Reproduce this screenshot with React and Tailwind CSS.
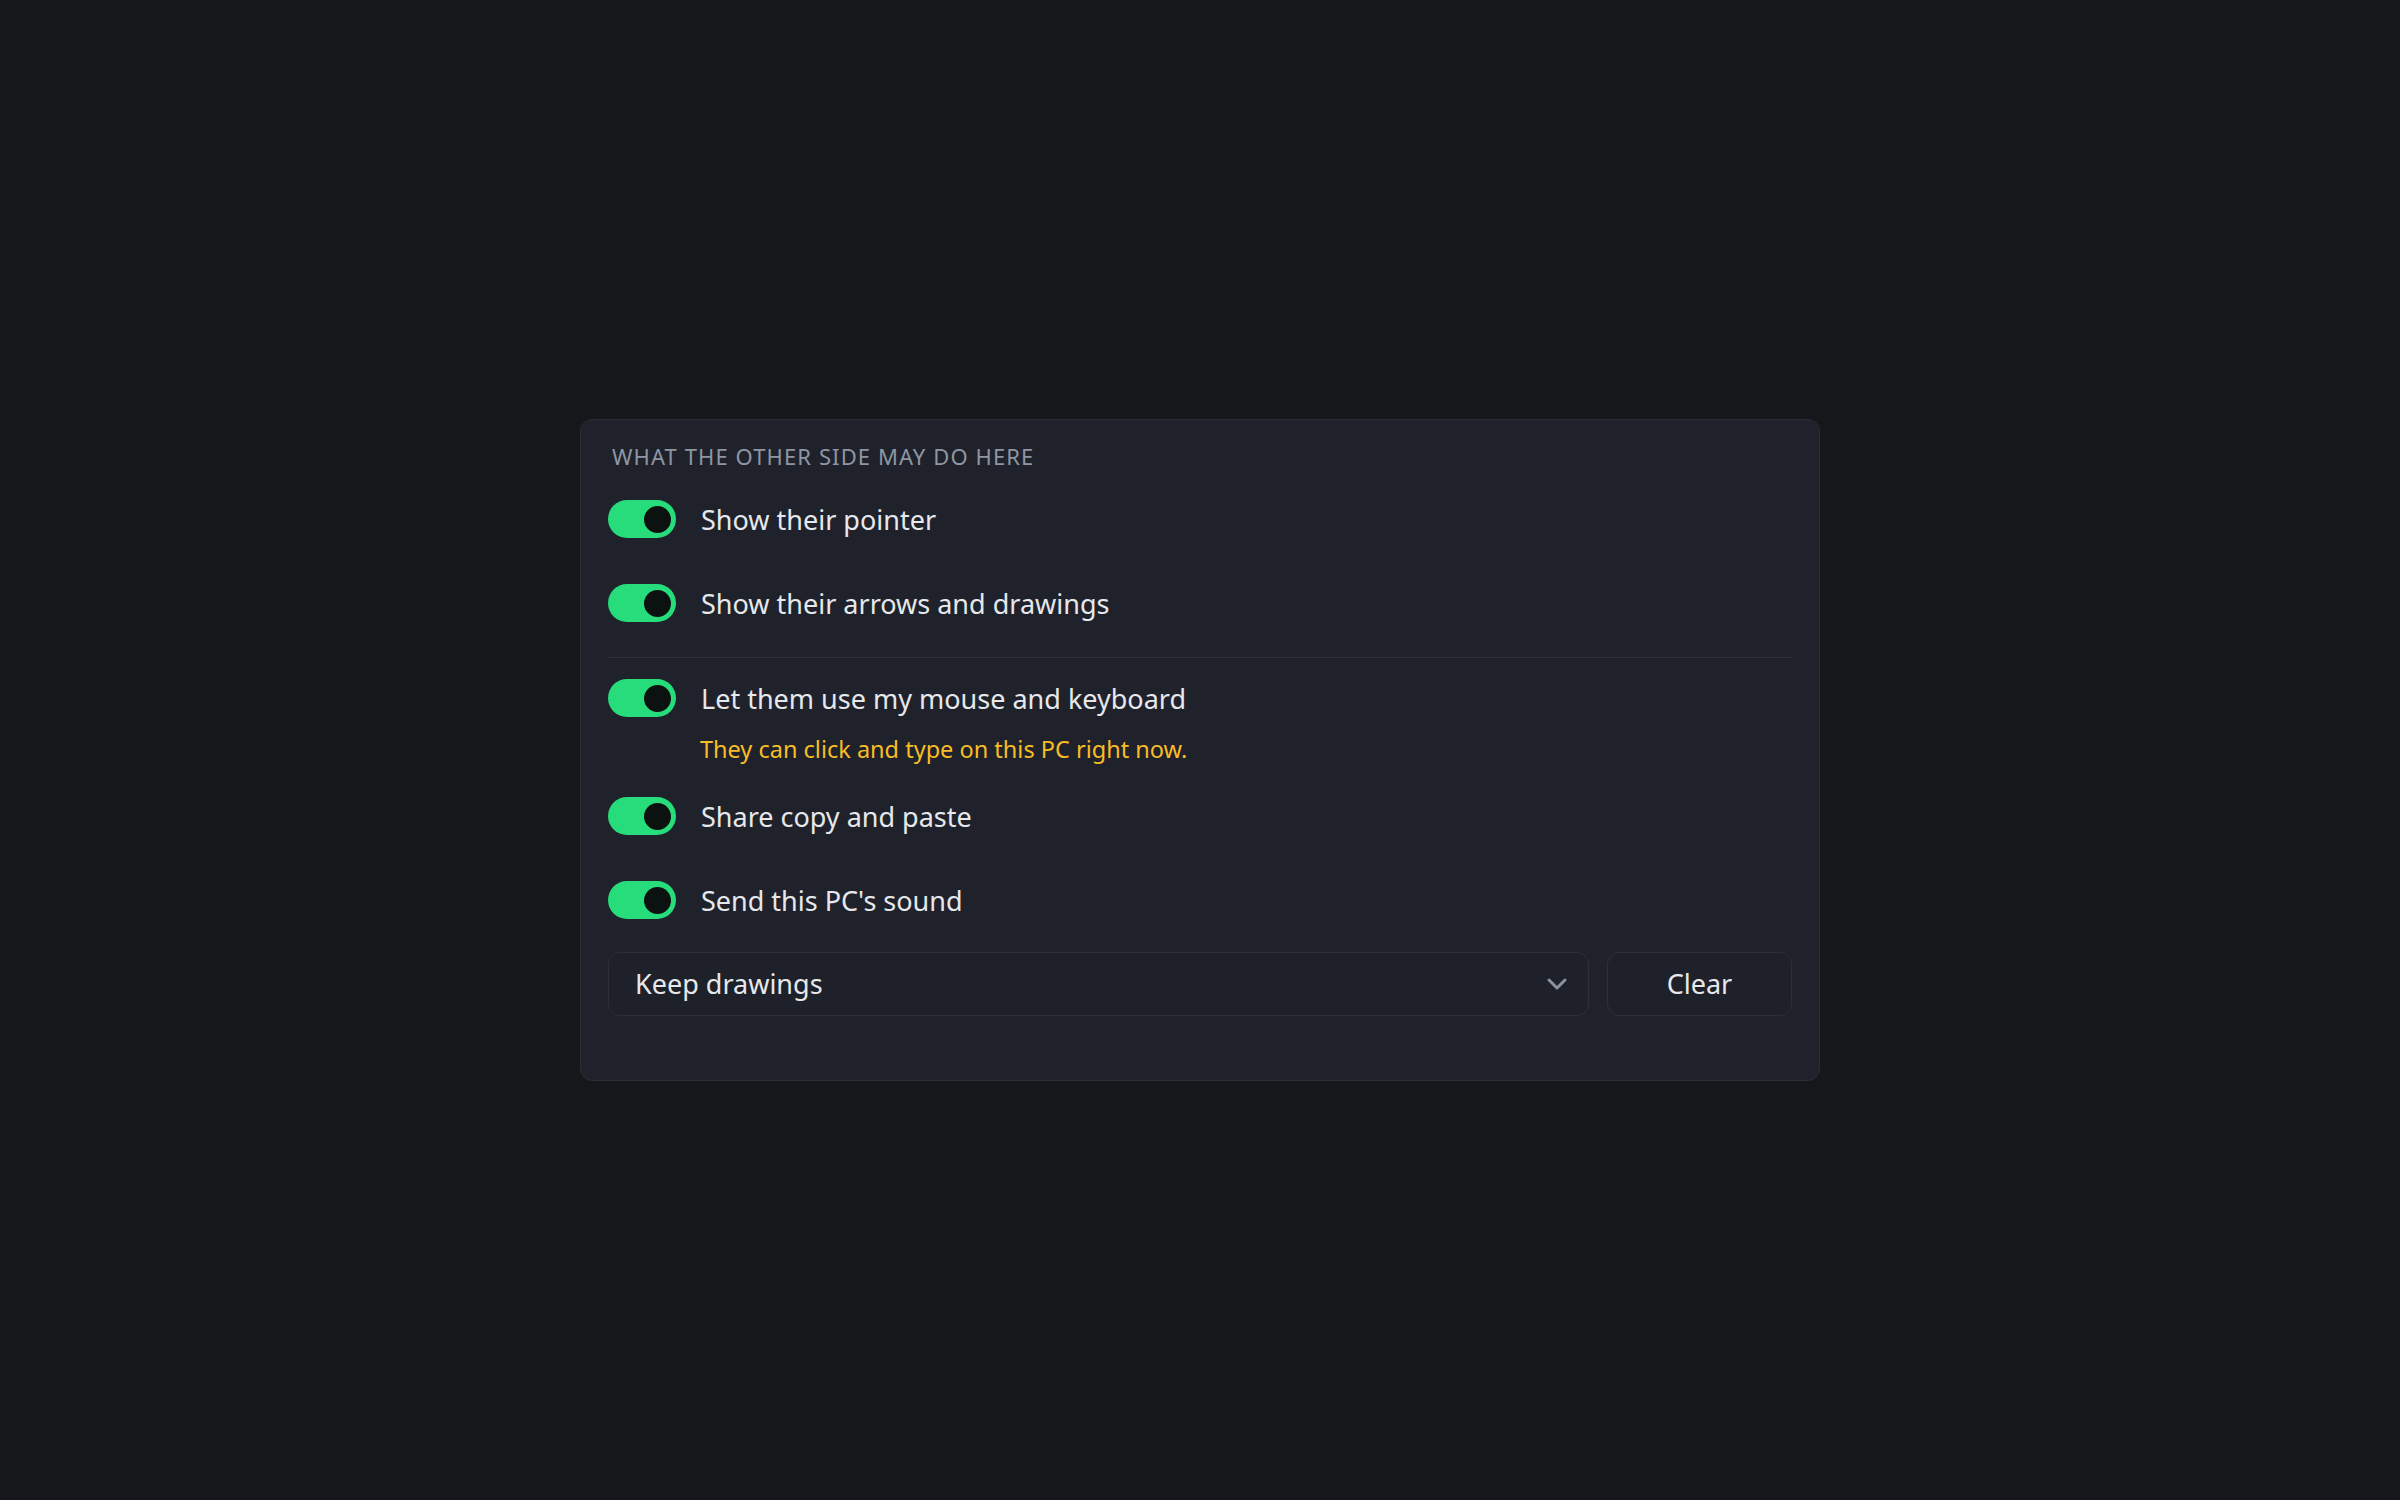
import React from 'react';

const font = { fontFamily: '"Noto Sans", "Open Sans", sans-serif' };

const Toggle = () => (
  <div className="flex h-[38px] w-[68px] shrink-0 items-center justify-end rounded-full bg-[#27dd7b] pr-[5px]">
    <div className="h-[27px] w-[27px] rounded-full bg-[#0b1210]" />
  </div>
);

const Row = ({ label }) => (
  <div className="flex h-[44px] items-center gap-[25px]">
    <Toggle />
    <span className="text-[27px] leading-none text-[#e6e8ec]">{label}</span>
  </div>
);

export default function App() {
  return (
    <div className="flex min-h-screen items-start justify-center bg-[#15171b] pt-[419px]" style={font}>
      <div className="w-[1240px] rounded-[12px] border border-[#2a2d36] bg-[#1f222b] px-[27px] pt-[21px] pb-[64px]">
        {/* header */}
        <div className="flex h-[30px] items-center pl-[4px] text-[22px] uppercase tracking-[0.05em] text-[#8e96a3]">
          What the other side may do here
        </div>

        <div className="mt-[26px] flex flex-col gap-[40px]">
          <Row label="Show their pointer" />
          <Row label="Show their arrows and drawings" />
        </div>

        <div className="mt-[32px] h-px bg-[#2b2f39]" />

        <div className="mt-[18px]">
          <Row label="Let them use my mouse and keyboard" />
          <div className="mt-[15px] flex h-[30px] items-center pl-[92px] text-[23.5px] text-[#f8bc26]">
            They can click and type on this PC right now.
          </div>
        </div>

        <div className="mt-[29px] flex flex-col gap-[40px]">
          <Row label="Share copy and paste" />
          <Row label="Send this PC's sound" />
        </div>

        {/* controls */}
        <div className="mt-[30px] flex gap-[18px]">
          <div className="flex h-[64px] flex-1 items-center justify-between rounded-[12px] border border-[#2c303a] bg-[#1e2129] pl-[26px] pr-[20px]">
            <span className="text-[27px] text-[#e6e8ec]">Keep drawings</span>
            <svg width="22" height="14" viewBox="0 0 22 14" fill="none" stroke="#8b93a1" strokeWidth="3" strokeLinecap="round" strokeLinejoin="round">
              <path d="M3 3l8 8 8-8" />
            </svg>
          </div>
          <button className="flex h-[64px] w-[185px] items-center justify-center rounded-[12px] border border-[#2c303a] bg-[#1e2129] text-[27px] text-[#e6e8ec]">
            Clear
          </button>
        </div>
      </div>
    </div>
  );
}
